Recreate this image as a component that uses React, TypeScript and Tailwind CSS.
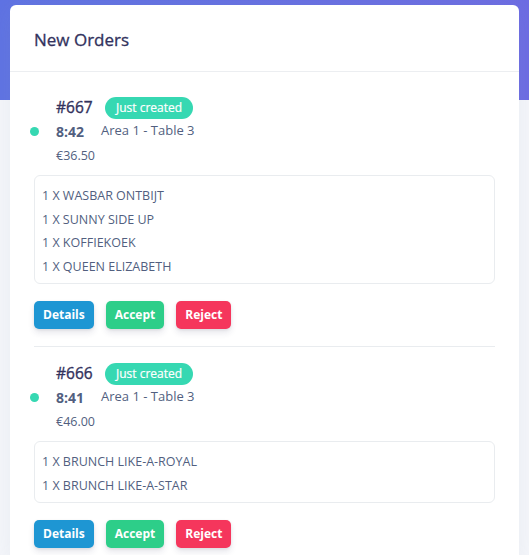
import React from "react";

type Order = {
  id: number;
  time: string;
  table: string;
  price: string;
  items: string[];
};

const orders: Order[] = [
  {
    id: 667,
    time: "8:42",
    table: "Area 1 - Table 3",
    price: "€36.50",
    items: ["1 X WASBAR ONTBIJT", "1 X SUNNY SIDE UP", "1 X KOFFIEKOEK", "1 X QUEEN ELIZABETH"],
  },
  {
    id: 666,
    time: "8:41",
    table: "Area 1 - Table 3",
    price: "€46.00",
    items: ["1 X BRUNCH LIKE-A-ROYAL", "1 X BRUNCH LIKE-A-STAR"],
  },
];

const OrderCard = ({ order, first }: { order: Order; first: boolean }) => {
  return (
    <div className={first ? "" : "mt-[17px] border-t border-[#e9ecef] pt-[16px]"}>
      {/* Number + status */}
      <div className="flex items-center pl-[22px] h-[22px]">
        <span className="w-[49px] text-[15.5px] text-[#32325d] [-webkit-text-stroke:0.35px_#32325d]">#{order.id}</span>
        <span className="h-[22px] px-[11px] rounded-full bg-[#36d8b2] text-white text-[12px] flex items-center [-webkit-text-stroke:0.2px_#ffffff]">
          Just created
        </span>
      </div>
      {/* Time + table */}
      <div className="flex items-center -ml-[4px] mt-[2px] h-[20px]">
        <span className="w-[9px] h-[9px] rounded-full bg-[#36d8b2] mr-[17px]"></span>
        <span className="text-[14px] font-bold text-[#525f7f] mr-[17px]">{order.time}</span>
        <span className="text-[13px] text-[#525f7f]">{order.table}</span>
      </div>
      <div className="pl-[22px] mt-[5px] h-[20px] flex items-center text-[12.5px] text-[#525f7f]">
        {order.price}
      </div>
      {/* Items */}
      <div className="mt-[9px] border border-[#e9ecef] rounded-[6px] px-[7px] pt-[8px] pb-[5px]">
        {order.items.map((item) => (
          <div key={item} className="text-[12.5px] leading-[23.5px] text-[#525f7f]">
            {item}
          </div>
        ))}
      </div>
      {/* Actions */}
      <div className="flex gap-[12px] mt-[17px]">
        <button className="h-[28px] px-[9px] rounded-[5px] bg-[#1e96d3] text-white text-[12px] font-bold shadow-[0_4px_6px_rgba(50,50,93,0.11),0_1px_3px_rgba(0,0,0,0.08)]">
          Details
        </button>
        <button className="h-[28px] px-[9px] rounded-[5px] bg-[#2dce89] text-white text-[12px] font-bold shadow-[0_4px_6px_rgba(50,50,93,0.11),0_1px_3px_rgba(0,0,0,0.08)]">
          Accept
        </button>
        <button className="h-[28px] px-[9px] rounded-[5px] bg-[#f5365c] text-white text-[12px] font-bold shadow-[0_4px_6px_rgba(50,50,93,0.11),0_1px_3px_rgba(0,0,0,0.08)]">
          Reject
        </button>
      </div>
    </div>
  );
};

export default function App() {
  return (
    <div className="min-h-screen bg-[#f7f8fc] font-['Open_Sans',sans-serif]">
      {/* Header band */}
      <div className="h-[100px] bg-gradient-to-r from-[#5e72e4] to-[#6c6be4]"></div>
      <div className="px-[10px] -mt-[95px] pb-6">
        <div className="bg-white rounded-[6px] shadow-[0_0_2rem_0_rgba(136,152,170,0.15)]">
          <div className="px-6 pt-[3px] h-[67px] flex items-center border-b border-[#eceef1]">
            <h3 className="text-[17px] text-[#32325d] [-webkit-text-stroke:0.3px_#32325d]">New Orders</h3>
          </div>
          <div className="px-6 pt-[25px] pb-6">
            {orders.map((o, i) => (
              <OrderCard key={o.id} order={o} first={i === 0} />
            ))}
          </div>
        </div>
      </div>
    </div>
  );
}
